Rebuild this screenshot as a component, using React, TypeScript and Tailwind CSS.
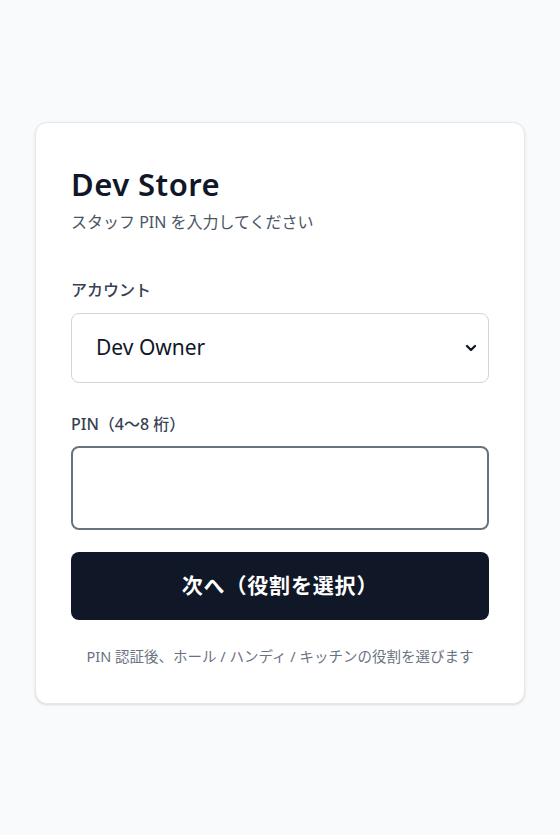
import { useState } from "react";
import { ChevronDown } from "lucide-react";

export default function App() {
  const [account, setAccount] = useState("dev-owner");
  const [pin, setPin] = useState("");

  return (
    <div
      className="min-h-screen bg-gray-50 flex items-center justify-center px-[35px]"
      style={{ fontFamily: '"Noto Sans", "Noto Sans CJK JP", sans-serif' }}
    >
      <div className="w-full -mt-[9px] bg-white border border-gray-200 rounded-xl shadow-sm p-[35px]">
        <h1 className="text-[31px] leading-9 font-semibold tracking-[0.015em] text-gray-900 mt-[8px]">Dev Store</h1>
        <p className="mt-2 text-base text-gray-600">スタッフ PIN を入力してください</p>

        <form className="mt-[44px] flex flex-col" onSubmit={(e) => e.preventDefault()}>
          <label className="text-base font-medium text-gray-700">アカウント</label>
          <div className="relative mt-[11px]">
            <select
              value={account}
              onChange={(e) => setAccount(e.target.value)}
              className="h-[70px] w-full appearance-none rounded-lg border border-gray-300 bg-white pl-6 pr-12 text-[21px] text-gray-900"
            >
              <option value="dev-owner">Dev Owner</option>
            </select>
            <ChevronDown
              className="pointer-events-none absolute right-[10px] top-1/2 h-4 w-4 -translate-y-1/2 text-gray-900"
              strokeWidth={3.5}
            />
          </div>

          <label className="mt-[29px] text-base font-medium text-gray-700">PIN（4〜8 桁）</label>
          <input
            type="password"
            inputMode="numeric"
            value={pin}
            onChange={(e) => setPin(e.target.value)}
            className="mt-[10px] h-[84px] w-full rounded-lg border-2 border-gray-500 bg-white px-6 text-3xl tracking-widest outline-none"
          />

          <button
            type="submit"
            className="mt-[22px] h-[68px] w-full rounded-lg bg-gray-900 text-[21px] font-bold tracking-[0.04em] text-white"
          >
            次へ（役割を選択）
          </button>

          <p className="mt-[26px] text-center text-[14.5px] text-gray-500">
            PIN 認証後、ホール / ハンディ / キッチンの役割を選びます
          </p>
        </form>
      </div>
    </div>
  );
}
